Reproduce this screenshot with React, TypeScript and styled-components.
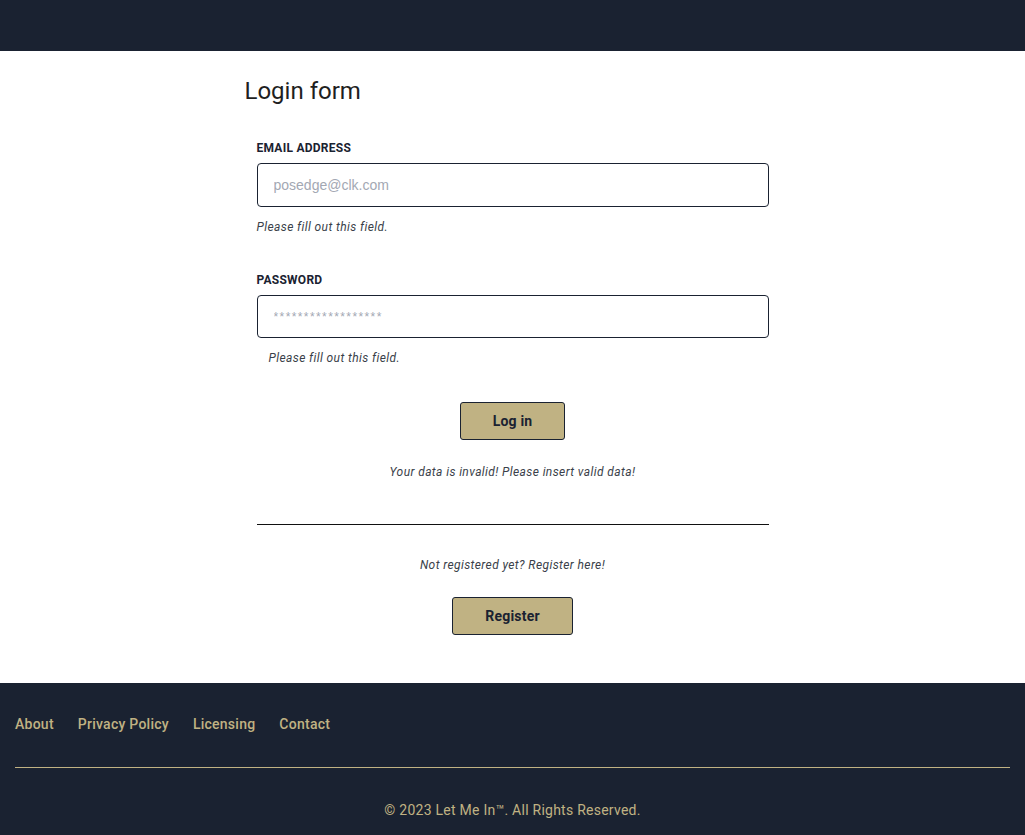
import React from "react";
import styled, { createGlobalStyle } from "styled-components";

const GlobalStyle = createGlobalStyle`
  html, body { margin: 0; padding: 0; background: #ffffff; }
  body { font-family: Roboto, "Liberation Sans", sans-serif; color: #1a2231; }
  * { box-sizing: border-box; }
`;

const dark = "#1a2231";
const gold = "#c0b283";

const Header = styled.header`
  height: 51px;
  background: ${dark};
`;

const Main = styled.main`
  height: 632px;
  display: flex;
  justify-content: center;
`;

const Container = styled.div`
  width: 536px;
  padding-top: 25px;
`;

const Title = styled.h1`
  margin: 0 0 34px 0;
  font-size: 24px;
  font-weight: 400;
  line-height: 30px;
  color: #1f1f1f;
`;

const Form = styled.form`
  padding: 0 12px;
  display: flex;
  flex-direction: column;
`;

const Field = styled.div<{ $mb: number }>`
  display: flex;
  flex-direction: column;
  margin-bottom: ${(p) => p.$mb}px;
`;

const Label = styled.label`
  font-size: 12px;
  font-weight: 700;
  line-height: 16px;
  letter-spacing: 0.25px;
  color: ${dark};
  margin-bottom: 7px;
`;

const Input = styled.input<{ $h: number; $ph: number; $ls: number }>`
  height: ${(p) => p.$h}px;
  width: 100%;
  border: 1px solid ${dark};
  border-radius: 4px;
  padding: 0 16px;
  font-family: "Liberation Sans", Arial, sans-serif;
  font-size: ${(p) => p.$ph}px;
  letter-spacing: ${(p) => p.$ls}px;
  outline: none;
  &::placeholder { color: #a3a8b3; }
`;

const Help = styled.p<{ $indent: number }>`
  margin: 12px 0 0 ${(p) => p.$indent}px;
  font-size: 12px;
  font-style: italic;
  line-height: 16px;
  letter-spacing: 0.4px;
  color: #3a3f4a;
`;

const Center = styled.div`
  display: flex;
  flex-direction: column;
  align-items: center;
`;

const Button = styled.button<{ $w: number }>`
  width: ${(p) => p.$w}px;
  height: 38px;
  background: ${gold};
  border: 1px solid ${dark};
  border-radius: 3px;
  font-family: Roboto, sans-serif;
  font-size: 14px;
  font-weight: 700;
  letter-spacing: 0.2px;
  color: ${dark};
  cursor: pointer;
`;

const Note = styled.p<{ $mt: number; $mb: number }>`
  margin: ${(p) => p.$mt}px 0 ${(p) => p.$mb}px 0;
  font-size: 12px;
  font-style: italic;
  line-height: 16px;
  letter-spacing: 0.4px;
  color: #3a3f4a;
  text-align: center;
`;

const Divider = styled.hr`
  width: 100%;
  margin: 0;
  border: none;
  border-top: 1px solid #111;
`;

const Footer = styled.footer`
  height: 152px;
  background: ${dark};
  padding: 32px 15px 0 15px;
`;

const Links = styled.nav`
  display: flex;
  gap: 24px;
  height: 18px;
  align-items: center;
`;

const Link = styled.a`
  color: ${gold};
  font-size: 14px;
  font-weight: 500;
  letter-spacing: 0.25px;
  text-decoration: none;
  line-height: 18px;
`;

const FooterLine = styled.hr`
  margin: 34px 0 0 0;
  border: none;
  border-top: 1px solid ${gold};
`;

const Copy = styled.p`
  margin: 33px 0 0 0;
  text-align: center;
  color: ${gold};
  font-size: 14px;
  letter-spacing: 0.25px;
  line-height: 18px;
`;

export default function App() {
  return (
    <>
      <GlobalStyle />
      <Header />
      <Main>
        <Container>
          <Title>Login form</Title>
          <Form onSubmit={(e) => e.preventDefault()}>
            <Field $mb={37}>
              <Label>EMAIL ADDRESS</Label>
              <Input $h={44} $ph={14} $ls={0} type="email" placeholder="posedge@clk.com" />
              <Help $indent={0}>Please fill out this field.</Help>
            </Field>
            <Field $mb={36}>
              <Label>PASSWORD</Label>
              <Input $h={43} $ph={12} $ls={1.4} type="password" placeholder="******************" />
              <Help $indent={12}>Please fill out this field.</Help>
            </Field>
            <Center>
              <Button $w={105} type="submit">Log in</Button>
              <Note $mt={24} $mb={44}>Your data is invalid! Please insert valid data!</Note>
              <Divider />
              <Note $mt={32} $mb={24}>Not registered yet? Register here!</Note>
              <Button $w={121} type="button">Register</Button>
            </Center>
          </Form>
        </Container>
      </Main>
      <Footer>
        <Links>
          <Link href="#">About</Link>
          <Link href="#">Privacy Policy</Link>
          <Link href="#">Licensing</Link>
          <Link href="#">Contact</Link>
        </Links>
        <FooterLine />
        <Copy>© 2023 Let Me In™. All Rights Reserved.</Copy>
      </Footer>
    </>
  );
}
